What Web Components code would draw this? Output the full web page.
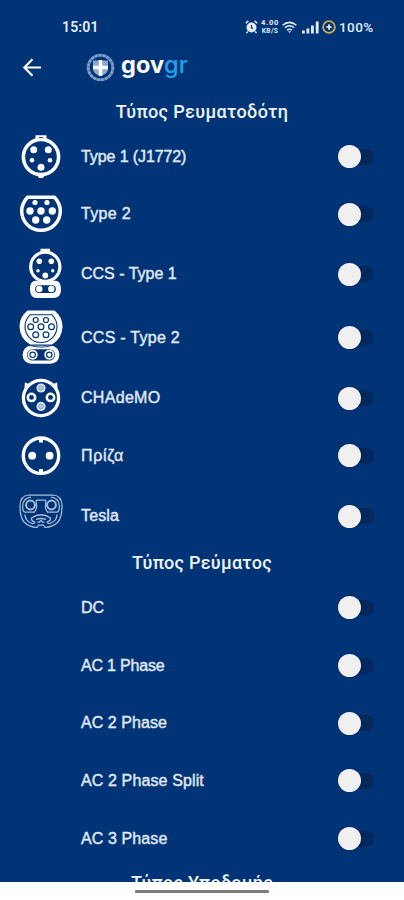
<!DOCTYPE html>
<html lang="el">
<head>
<meta charset="utf-8">
<meta name="viewport" content="width=device-width">
<title>govgr</title>
<style>
html, body { margin: 0; height: 100%; overflow: hidden; background: #fff; }
body { font-family: "Inter", "Liberation Sans", sans-serif; }
</style>
</head>
<body>
<charger-app></charger-app>
<script>
const define = (name, html) => customElements.define(name, class extends HTMLElement {
  constructor() {
    super();
    const t = document.createElement('template');
    t.innerHTML = html;
    this.attachShadow({ mode: 'open' }).append(t.content.cloneNode(true));
  }
});

const dots = (list, extra = '') => list.map(([x, y, r]) => `<circle cx="${x}" cy="${y}" r="${r}" ${extra}/>`).join('');

const icons = {
  type1: `<g fill="none" stroke="#fff"><circle cx="25" cy="30" r="17.6" stroke-width="3.6"/></g>
    <path d="M19.5 12.5V8.2h11v4.3zM21 48h8l-2 3h-4z"/>
    <path d="M23 10.6h4" stroke="#003476" stroke-width="1"/>` +
    dots([[17.7,22.7,3.5],[32.3,22.7,3.5],[16,33.3,2.3],[34,33.3,2.3],[25,40.3,3.5]]),
  type2: `<path d="M11.5 13.3H38.5Q44.3 19.5 44.3 27A19.3 19.3 0 0 1 5.7 27Q5.7 19.5 11.5 13.3Z" fill="none" stroke="#fff" stroke-width="3.5" stroke-linejoin="round"/>` +
    dots([[19,18.5,2.6],[31,18.5,2.6],[14,27,3.7],[25,27,3.7],[36.3,27,3.7],[19.7,36,3.7],[30.7,36,3.7]]),
  ccs1: `<circle cx="29.3" cy="22.7" r="14.6" fill="none" stroke="#fff" stroke-width="3.2"/>
    <path d="M24.5 8V4.8h9.5V8zM22 36h15v3H22z"/>
    <path fill-rule="evenodd" d="M19 36.7H40Q45 37.5 45 45.5T38 54H21Q14 54 14 45.5T19 36.7ZM23 41.2a3.8 3.8 0 0 0 0 7.8H36a3.8 3.8 0 0 0 0-7.8Z"/>` +
    dots([[23.3,17.3,2.8],[35.3,17.3,2.8],[22,26.7,1.7],[36.7,26.7,1.7],[29.3,31.5,2.9],[23.3,45,3.2],[35.3,45,3.2]]),
  ccs2: `<path d="M11.5 2.5H38.5Q46.5 9 46.5 18.5A21.5 21.5 0 0 1 36 36.5H14A21.5 21.5 0 0 1 3.5 18.5Q3.5 9 11.5 2.5Z"/>
    <path d="M14 6.8H36Q41 12 41 18.5A16 16 0 0 1 9 18.5Q9 12 14 6.8Z" fill="none" stroke="#003476" stroke-width="1.1"/>
    <rect x="6.7" y="37.8" width="36.6" height="18" rx="8.5"/>
    <rect x="11" y="41.2" width="28" height="11.4" rx="5.7" fill="#003476"/>
    <path d="M13 37.2Q25 41 37 37.2" fill="none" stroke="#003476" stroke-width=".9"/>` +
    dots([[19.7,12,2.5],[30,12,2.5],[14.7,18.7,2.9],[25,18.7,2.9],[35.5,18.7,2.9],[19.7,26.8,2.9],[30,26.8,2.9]], 'stroke="#003476" stroke-width="1.2"') +
    dots([[16.7,46.8,5],[33.3,46.8,5]]) +
    dots([[16.7,46.8,2.7],[33.3,46.8,2.7]], 'stroke="#003476" stroke-width="1.2"'),
  chademo: `<circle cx="25" cy="30" r="17.6" fill="none" stroke="#fff" stroke-width="3.3"/>
    <path d="M8.5 22 8.8 14.5l6 2zM41.500 22 41.200 14.500l-6 2z"/>` +
    dots([[25,20,4.6],[25,38.4,4.6]], 'fill-opacity=".85"') +
    dots([[25,20,2.3],[25,38.4,2.3]], 'fill="#b7c8df" stroke="#003476" stroke-opacity=".35" stroke-width=".8"') +
    dots([[15.5,29.4,3.7],[34.5,29.4,3.7]], 'fill="#003476" stroke="#fff" stroke-width="2.5"'),
  schuko: `<circle cx="25" cy="29.7" r="17.7" fill="none" stroke="#fff" stroke-width="3.3"/>
    <path d="M23 12.5h4v4h-4zM23 43h4v4h-4z"/>` +
    dots([[16.2,29.7,3.9],[33.6,29.7,3.9]]),
  tesla: `<g fill="none" stroke="#a9bedc" stroke-width="1.25" stroke-linejoin="round">
    <path d="M13 9H37Q46 9.5 46 20Q46 31 42 36Q37 41 29 41.5L27.5 39H22.5L21 41.5Q13 41 8 36Q4 31 4 20Q4 9.5 13 9Z"/>
    <path d="M15 11.2Q7 12 6.7 20Q6.5 26 9 26H18.5Q21 23 20.5 19Q20 15 20.5 14H29.5Q30 15 29.5 19Q29 23 31.5 26H41Q43.5 26 43.3 20Q43 12 35 11.2"/>
    <path d="M9 28.5Q9 35 16 37.5Q18 38 19 36Q15 35 15.5 32Q25 25.5 34.5 32Q35 35 31 36Q32 38 34 37.5Q41 35 41 28.5"/>
    <path d="M20 33.5Q25 31.5 30 33.5M21.5 36H23.5L25 34.5L26.5 36H28.5"/>
    <circle cx="14.5" cy="19" r="4.4" stroke-width="2"/><circle cx="35.5" cy="19" r="4.4" stroke-width="2"/></g>`
};

define('status-bar', `
<style>
:host { display: flex; height: 46px; padding: 8px 29px 0 62px; box-sizing: border-box; align-items: center; color: #e6edf8; font: 500 13.5px Roboto, sans-serif; }
.time { flex: 1; font-size: 14px; font-weight: 600; letter-spacing: .15px; }
svg { display: block; flex: none; }
.speed { width: 20px; margin: 0 2px 0 2px; font: 700 7.5px/8px Roboto, sans-serif; display: grid; grid-template-rows: 8px 8px; justify-items: center; }
.speed span { display: block; height: 8px; overflow: hidden; letter-spacing: .7px; }
.speed span:last-child { font-size: 6.5px; letter-spacing: .5px; }
.pct { margin-left: 3px; letter-spacing: .4px; width: 36px; white-space: nowrap; }
</style>
<span class="time">15:01</span>
<svg width="13" height="14" viewBox="0 0 13 14"><circle cx="6.5" cy="7.500" r="5" fill="#e6edf8"/><path d="M.8 3.300 3.300.900M12.200 3.300 9.700.900M2.800 11.500 1.500 13M10.200 11.500l1.300 1.500" stroke="#e6edf8" stroke-width="1.500"/><path d="M6.500 5v2.800l1.500.8" fill="none" stroke="#003476" stroke-width="1.200"/></svg>
<div class="speed"><span>4.00</span><span>KB/S</span></div>
<svg width="15" height="13" viewBox="0 0 15 13" fill="none" stroke="#e6edf8" stroke-width="1.500"><path d="M.6 4.300Q7.500-1.500 14.400 4.300M2.800 6.800q4.700-4 9.400 0M5 9.200q2.500-2 5 0"/><path d="M6 10.200h3L7.500 12z" fill="#e6edf8" stroke="none"/></svg>
<svg width="17" height="13" viewBox="0 0 17 13" fill="#e6edf8" style="margin:0 3px 0 5px"><path d="M0 9.500h2.800V12.500H0zM4.500 7.500H7.300V12.500H4.500zM9 4.500h2.800v8H9zM13.800.5h2.800v12h-2.800z"/></svg>
<svg width="14" height="14" viewBox="0 0 14 14"><circle cx="7" cy="7" r="5.900" fill="none" stroke="#cfa654" stroke-width="1.800"/><path d="M7 4.300v5.400M4.300 7h5.400" stroke="#e6edf8" stroke-width="1.700"/></svg>
<span class="pct">100%</span>`);

define('app-header', `
<style>
:host { display: flex; height: 50px; padding: 0 0 7px 22px; box-sizing: border-box; align-items: center; color: #fff; }
svg { display: block; flex: none; }
.crest { margin: 0 6px 0 44px; }
.brand { font: 650 23.5px/30px Inter, sans-serif; letter-spacing: .05px; margin-top: -6px; }
.brand span { color: #23a0e8; font-weight: 550; }
</style>
<svg width="20" height="20" viewBox="0 0 20 20" fill="none" stroke="#fff" stroke-width="2.100"><path d="M19 9.500H3M10.500 1.300 2.300 9.500l8.200 8.200"/></svg>
<svg class="crest" width="29" height="29" viewBox="0 0 29 29"><circle cx="14.500" cy="14.500" r="12.300" fill="none" stroke="#5f83b5" stroke-width="3"/><circle cx="14.500" cy="14.500" r="12.300" fill="none" stroke="#86a2c9" stroke-width="2.500" stroke-dasharray="2.200 1.800"/><path d="M7 7.500H22V16Q22 21 14.500 23Q7 21 7 16Z" fill="#8fa9cd"/><path d="M14.500 7v16M7 14.500H22" stroke="#fff" stroke-width="3.500"/></svg>
<div class="brand">gov<span>gr</span></div>`);

define('section-title', `
<style>
:host { display: flex; height: 32px; align-items: center; justify-content: center; color: #f0f4fb; font: 500 18px/24px Roboto, sans-serif; letter-spacing: var(--track, .25px); white-space: nowrap; }
</style><slot></slot>`);

define('toggle-switch', `
<style>
:host { display: flex; width: 38px; height: 24px; align-items: center; }
.track { width: 36px; height: 16px; border-radius: 8px; background: #04285c; display: flex; align-items: center; }
.knob { width: 23px; height: 23px; border-radius: 50%; background: #f0f0f0; flex: none; box-shadow: 0 0 2px #001f5a; }
</style><div class="track"><div class="knob"></div></div>`);

customElements.define('filter-row', class extends HTMLElement {
  connectedCallback() {
    const icon = icons[this.getAttribute('icon')];
    this.attachShadow({ mode: 'open' }).innerHTML = `
<style>
:host { display: grid; grid-template-columns: 50px 1fr 38px; column-gap: 15px; padding: 0 28px 0 16px; align-items: center; height: 57.7px; box-sizing: border-box; color: #e2eaf6; font: 400 16px/20px "Liberation Sans", sans-serif; }
svg { display: block; overflow: visible; margin: -10px 0; }
.label { white-space: nowrap; letter-spacing: var(--track, 0); -webkit-text-stroke: .4px #e2eaf6; }
</style>
<div>${icon ? `<svg width="50" height="60" viewBox="0 0 50 60" fill="#fff">${icon}</svg>` : ''}</div>
<span class="label"><slot></slot></span><toggle-switch></toggle-switch>`;
  }
});

define('charger-app', `
<style>
:host { display: flex; flex-direction: column; width: 404px; height: 900px; background: #fff; overflow: hidden; }
main { height: 882px; flex: none; overflow: hidden; background: #003476; display: flex; flex-direction: column; }
main > * { flex: none; }
footer { flex: 1; display: flex; justify-content: center; padding-top: 8px; }
footer div { width: 134px; height: 3px; background: #7d7d7d; border-radius: 1px; }
</style>
<main>
<status-bar></status-bar>
<app-header></app-header>
<section-title style="--track:.35px">Τύπος Ρευματοδότη</section-title>
<filter-row icon="type1" style="height:57px;--track:-.1px">Type 1 (J1772)</filter-row>
<filter-row icon="type2" style="height:58px;--track:.3px">Type 2</filter-row>
<filter-row icon="ccs1" style="height:62px">CCS - Type 1</filter-row>
<filter-row icon="ccs2" style="height:65px;--track:.27px">CCS - Type 2</filter-row>
<filter-row icon="chademo" style="height:56px;--track:.3px">CHAdeMO</filter-row>
<filter-row icon="schuko" style="height:59px;--track:.7px">Πρίζα</filter-row>
<filter-row icon="tesla" style="height:62px;--track:.15px">Tesla</filter-row>
<section-title>Τύπος Ρεύματος</section-title>
<filter-row>DC</filter-row>
<filter-row style="--track:-.2px">AC 1 Phase</filter-row>
<filter-row style="--track:.05px">AC 2 Phase</filter-row>
<filter-row style="--track:.12px">AC 2 Phase Split</filter-row>
<filter-row style="--track:.1px">AC 3 Phase</filter-row>
<section-title>Τύπος Υποδομής</section-title>
</main>
<footer><div></div></footer>`);
</script>
</body>
</html>
